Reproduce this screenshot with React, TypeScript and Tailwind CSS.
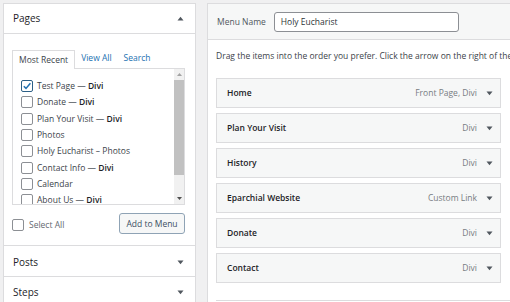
import React from "react";

const Check = ({ checked }: { checked?: boolean }) => (
  <span
    className={
      "inline-flex items-center justify-center w-[12px] h-[12px] rounded-[2px] border bg-white shrink-0 " +
      (checked ? "border-[#2c5f86]" : "border-[#8c8f94]")
    }
  >
    {checked && (
      <svg width="10" height="10" viewBox="0 0 10 10">
        <path d="M1.8 5.2 L4 7.4 L8.4 2.2" fill="none" stroke="#2271b1" strokeWidth="1.5" />
      </svg>
    )}
  </span>
);

const Tri = ({ up, color = "#50575e" }: { up?: boolean; color?: string }) => (
  <svg width="7" height="5" viewBox="0 0 7 5">
    {up ? <path d="M0.5 4.5 L3.5 0.8 L6.5 4.5 Z" fill={color} /> : <path d="M0.5 0.5 L6.5 0.5 L3.5 4.2 Z" fill={color} />}
  </svg>
);

const pages: { t: string; d?: string; c?: boolean }[] = [
  { t: "Test Page", d: "Divi", c: true },
  { t: "Donate", d: "Divi" },
  { t: "Plan Your Visit", d: "Divi" },
  { t: "Photos" },
  { t: "Holy Eucharist – Photos" },
  { t: "Contact Info", d: "Divi" },
  { t: "Calendar" },
  { t: "About Us", d: "Divi" },
];

const items = [
  { t: "Home", m: "Front Page, Divi" },
  { t: "Plan Your Visit", m: "Divi" },
  { t: "History", m: "Divi" },
  { t: "Eparchial Website", m: "Custom Link" },
  { t: "Donate", m: "Divi" },
  { t: "Contact", m: "Divi" },
];

export default function App() {
  return (
    <div
      className="w-[510px] h-[302px] overflow-hidden bg-[#f0f0f1] flex items-start gap-[11px] pl-[3px] pt-[3px] text-[8.5px] text-[#32373c]"
      style={{ fontFamily: '"Open Sans", "Noto Sans", sans-serif' }}
    >
      {/* Left panel */}
      <div className="w-[193px] h-[310px] shrink-0 bg-white border border-[#dcdcde] flex flex-col">
        <div className="h-[30px] border-b border-[#dcdcde] flex items-center justify-between pl-[9px] pr-[11px]">
          <span className="text-[10px] text-[#1d2327]">Pages</span>
          <Tri up />
        </div>
        <div className="pl-[8px] pr-[10px] pt-[16px] pb-[11px]">
          <div className="flex items-end h-[18px] leading-[12px]">
            <div className="relative z-10 h-[19px] mb-[-1px] bg-white border border-b-0 border-[#dcdcde] px-[6px] flex items-center text-[#3c434a]">
              Most Recent
            </div>
            <span className="ml-[6px] mb-[4px] text-[#2271b1]">View All</span>
            <span className="ml-[12px] mb-[4px] text-[#2271b1]">Search</span>
          </div>
          <div className="h-[137px] border border-[#dcdcde] flex overflow-hidden">
            <div className="flex-1 pl-[8px] pt-[9px] flex flex-col">
              {pages.map((p) => (
                <div key={p.t} className="h-[16.3px] shrink-0 flex items-center gap-[4px] leading-[12px] text-[#3c434a] whitespace-nowrap">
                  <Check checked={p.c} />
                  <span>
                    {p.t}
                    {p.d && (
                      <>
                        {" — "}
                        <span className="font-semibold text-[#1d2327]">{p.d}</span>
                      </>
                    )}
                  </span>
                </div>
              ))}
            </div>
            <div className="w-[10px] bg-[#f1f1f1] flex flex-col items-center">
              <div className="h-[11px] flex items-center justify-center">
                <svg width="5" height="3" viewBox="0 0 5 3"><path d="M0 3 L2.5 0 L5 3 Z" fill="#a3a3a3" /></svg>
              </div>
              <div className="w-[10px] h-[95px] bg-[#c1c1c1]" />
              <div className="flex-1" />
              <div className="h-[11px] flex items-center justify-center">
                <svg width="5" height="3" viewBox="0 0 5 3"><path d="M0 0 L5 0 L2.5 3 Z" fill="#505050" /></svg>
              </div>
            </div>
          </div>
          <div className="mt-[8px] flex items-center justify-between">
            <div className="flex items-center gap-[5px] leading-[12px] pt-[3px]">
              <Check />
              <span className="text-[#646970]">Select All</span>
            </div>
            <div className="w-[66px] h-[21px] border border-[#8fa3b5] rounded-[3px] bg-[#f6f7f7] flex items-center justify-center text-[#3b4f63] leading-[12px]">
              Add to Menu
            </div>
          </div>
        </div>
        <div className="h-[31px] border-t border-[#dcdcde] flex items-center justify-between pl-[9px] pr-[11px] pt-[2px]">
          <span className="text-[10px] text-[#1d2327]">Posts</span>
          <Tri />
        </div>
        <div className="h-[31px] border-t border-[#dcdcde] flex items-center justify-between pl-[9px] pr-[11px]">
          <span className="text-[10px] text-[#1d2327]">Steps</span>
          <Tri />
        </div>
      </div>

      {/* Right panel */}
      <div className="w-[320px] h-[310px] shrink-0 bg-white border border-[#dcdcde] flex flex-col">
        <div className="h-[36px] bg-[#f6f7f7] border-b border-[#dcdcde] flex items-center pl-[9px]">
          <span className="text-[#50575e] leading-[12px]">Menu Name</span>
          <div className="ml-[8px] w-[185px] h-[20px] mt-[1px] bg-white border border-[#8c8f94] rounded-[3px] flex items-center pl-[6px] text-[#2c3338] leading-[12px]">
            Holy Eucharist
          </div>
        </div>
        <div className="pl-[8px] pt-[10px]">
          <div className="leading-[12px] text-[#3c434a] whitespace-nowrap">
            Drag the items into the order you prefer. Click the arrow on the right of the item to reveal additional configuration options.
          </div>
          <div className="mt-[16px] flex flex-col gap-[5px]">
            {items.map((it) => (
              <div
                key={it.t}
                className="w-[285px] h-[30px] bg-[#f6f7f7] border border-[#dcdcde] flex items-center justify-between pl-[10px] pr-[7px] leading-[12px]"
              >
                <span className="font-semibold text-[#1d2327]">{it.t}</span>
                <div className="flex items-center gap-[9px]">
                  <span className="text-[8.5px] text-[#787c82]">{it.m}</span>
                  <Tri />
                </div>
              </div>
            ))}
          </div>
          <div className="mt-[17px] border-t border-[#dcdcde]" />
        </div>
      </div>
    </div>
  );
}
